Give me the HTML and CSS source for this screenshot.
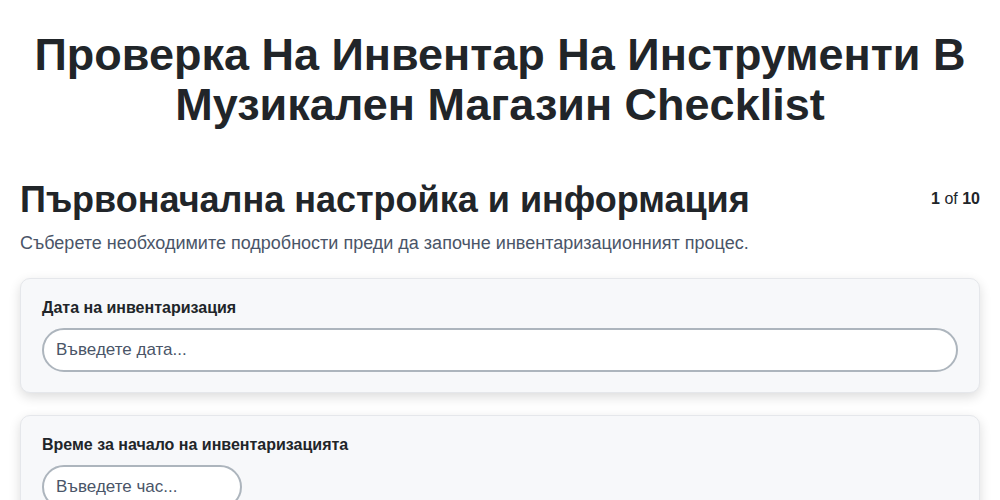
FILE: index.html
```html
<!DOCTYPE html>
<html lang="bg">
<head>
    <meta charset="UTF-8">
    <meta name="viewport" content="width=device-width, initial-scale=1.0">
    <title>Проверка На Инвентар На Инструменти В Музикален Магазин Checklist</title>
    <link rel="stylesheet" href="styles.css">
</head>
<body>
    <h1 class="page-title">Проверка На Инвентар На Инструменти В Музикален Магазин Checklist</h1>
    <section class="step">
        <div class="step-header">
            <h2 class="step-title">Първоначална настройка и информация</h2>
            <div class="step-count"><b>1</b> of <b>10</b></div>
        </div>
        <p class="step-desc">Съберете необходимите подробности преди да започне инвентаризационният процес.</p>

        <div class="field-card">
            <label class="field-label" for="date">Дата на инвентаризация</label>
            <input type="text" id="date" class="field-input" placeholder="Въведете дата...">
        </div>

        <div class="field-card">
            <label class="field-label" for="time">Време за начало на инвентаризацията</label>
            <input type="text" id="time" class="field-input short" placeholder="Въведете час...">
        </div>
    </section>
</body>
</html>
```

FILE: styles.css
```css
body {
    font-family: "Liberation Sans", Arial, sans-serif;
    background-color: #fff;
    color: #212529;
    margin: 0;
    padding: 20px;
}
.page-title {
    font-size: 45px;
    line-height: 50px;
    text-align: center;
    margin: 10px 0 48px;
}
.step-header {
    display: flex;
    justify-content: space-between;
    align-items: center;
}
.step-title {
    font-size: 36px;
    margin: 0;
    line-height: 1.2;
}
.step-count {
    font-size: 16px;
    margin-top: -2px;
}
.step-desc {
    font-size: 18px;
    color: #4a5568;
    margin: 12px 0 24px;
}
.field-card {
    background: #f7f8fa;
    border: 1px solid #e5e7eb;
    border-radius: 10px;
    box-shadow: 0 4px 12px rgba(0, 0, 0, 0.14);
    padding: 20px 21px;
    margin-bottom: 22px;
}
.field-label {
    display: block;
    font-size: 16px;
    font-weight: bold;
    margin-bottom: 11px;
}
.field-input {
    display: block;
    box-sizing: border-box;
    width: 100%;
    height: 44px;
    padding: 0 12px;
    border: 2px solid #adb5bd;
    border-radius: 22px;
    background: #fff;
    font-family: inherit;
    font-size: 17px;
    color: #212529;
}
.field-input::placeholder {
    color: #4a5568;
}
.field-input.short {
    width: 200px;
}
```
